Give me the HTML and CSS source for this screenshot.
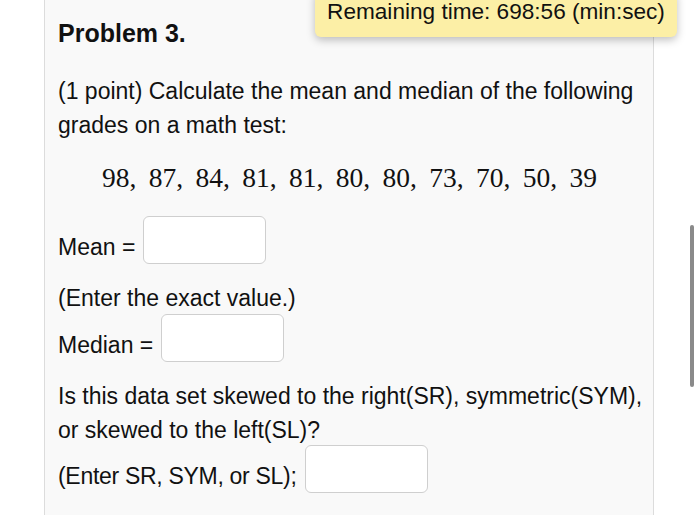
FILE: index.html
```html
<!DOCTYPE html>
<html>
<head>
<meta charset="utf-8">
<link rel="stylesheet" href="styles.css">
</head>
<body>
<div class="panel">
  <h2 class="title">Problem 3.</h2>
  <p class="text intro">(1 point) Calculate the mean and median of the following grades on a math test:</p>
  <div class="data">98, 87, 84, 81, 81, 80, 80, 73, 70, 50, 39</div>
  <div class="row row-mean"><span class="label">Mean =</span><span class="field"></span></div>
  <p class="text note">(Enter the exact value.)</p>
  <div class="row row-median"><span class="label">Median =</span><span class="field"></span></div>
  <p class="text question">Is this data set skewed to the right(SR), symmetric(SYM), or skewed to the left(SL)?</p>
  <div class="row row-skew"><span class="label label-tight">(Enter SR, SYM, or SL);</span><span class="field"></span></div>
</div>
<div class="timer">Remaining time: 698:56 (min:sec)</div>
<div class="scrollbar"></div>
</body>
</html>
```
FILE: styles.css
```css
html, body {
  margin: 0;
  padding: 0;
  background: #ffffff;
  height: 100%;
  overflow: hidden;
}
body {
  font-family: "Liberation Sans", Arial, sans-serif;
  color: #111;
}
.panel {
  margin-left: 44px;
  width: 595px;
  min-height: 100%;
  box-sizing: content-box;
  background: #f9f9f9;
  border-left: 1px solid #dcdcdc;
  border-right: 1px solid #dcdcdc;
  padding: 18px 0 0 13px;
}
.title {
  margin: 0;
  font-size: 25px;
  font-weight: bold;
  line-height: 30px;
}
.text {
  margin: 0;
  font-size: 23px;
  line-height: 34px;
}
.intro {
  margin-top: 26px;
}
.data {
  font-family: "Liberation Serif", "Times New Roman", serif;
  font-size: 27.5px;
  line-height: 34px;
  margin-top: 19px;
  padding-left: 44px;
  word-spacing: 5.5px;
}
.row {
  display: flex;
  align-items: flex-start;
  font-size: 23px;
  line-height: 34px;
  gap: 8px;
}
.label {
  margin-top: 14px;
}
.label-tight {
  letter-spacing: -0.3px;
}
.field {
  display: block;
  width: 121px;
  height: 46px;
  background: #fff;
  border: 1px solid #cfcfcf;
  border-radius: 6px;
}
.row-mean {
  margin-top: 21px;
}
.note {
  margin-top: 17px;
}
.row-median {
  margin-top: -1px;
}
.question {
  margin-top: 17px;
}
.row-skew {
  margin-top: -2px;
}
.timer {
  position: absolute;
  left: 315px;
  top: -10px;
  width: 362px;
  height: 47px;
  box-sizing: border-box;
  padding-top: 9px;
  text-align: center;
  background: #fcefa6;
  border-radius: 6px;
  box-shadow: 0 3px 8px rgba(0, 0, 0, 0.25);
  font-size: 22.6px;
  line-height: 26px;
  color: #111;
}
.scrollbar {
  position: absolute;
  left: 690px;
  top: 225px;
  width: 4px;
  height: 162px;
  border-radius: 2px;
  background: #8a8a8a;
}
```
